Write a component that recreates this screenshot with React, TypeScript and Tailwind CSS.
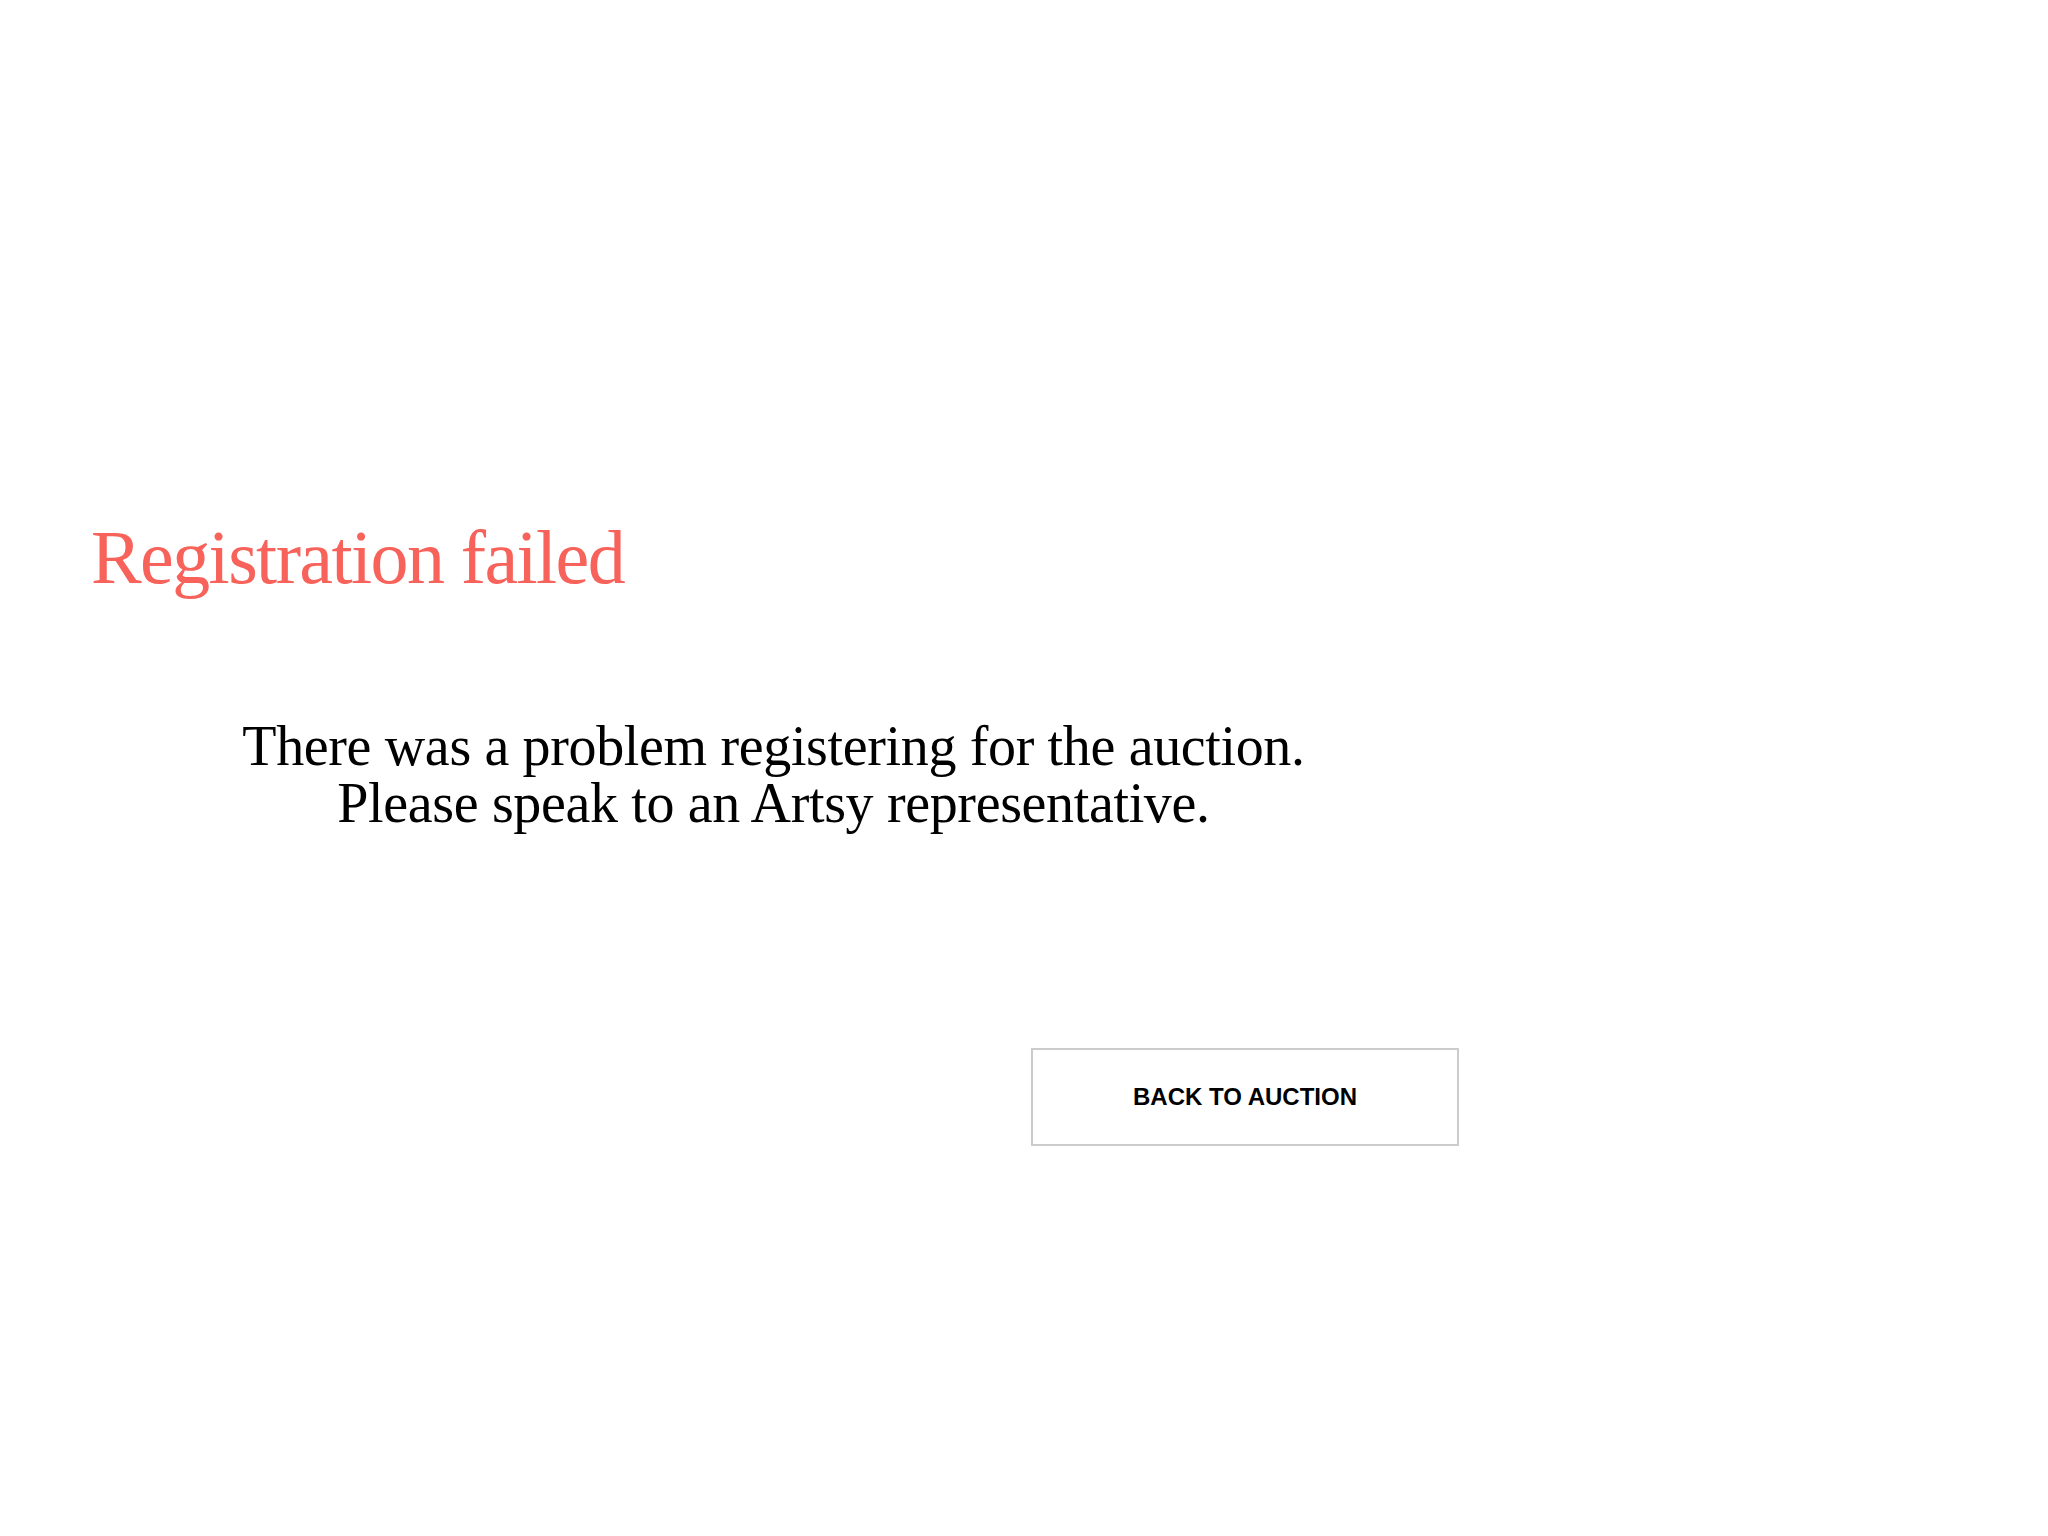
export default function App() {
  return (
    <div className="w-[2048px] h-[1536px] bg-white relative overflow-hidden">
      <div className="pt-[519px] pl-[91px]">
        <h1
          className="text-[76px] leading-none text-[#f7625a] m-0 font-normal tracking-[-1.6px]"
          style={{ fontFamily: '"Liberation Serif", serif' }}
        >
          Registration failed
        </h1>
      </div>
      <div className="mt-[123px] w-[1547px] text-center">
        <p
          className="text-[56px] leading-[57px] text-black tracking-[-0.35px]"
          style={{ fontFamily: '"Liberation Serif", serif' }}
        >
          There was a problem registering for the auction.
          <br />
          Please speak to an Artsy representative.
        </p>
      </div>
      <div className="mt-[216px] pl-[1031px]">
        <button className="w-[428px] h-[98px] border-2 border-[#cccccc] bg-white flex items-center justify-center">
          <span
            className="text-[24px] font-bold text-black"
            style={{ fontFamily: '"Liberation Sans", sans-serif' }}
          >
            BACK TO AUCTION
          </span>
        </button>
      </div>
    </div>
  );
}
